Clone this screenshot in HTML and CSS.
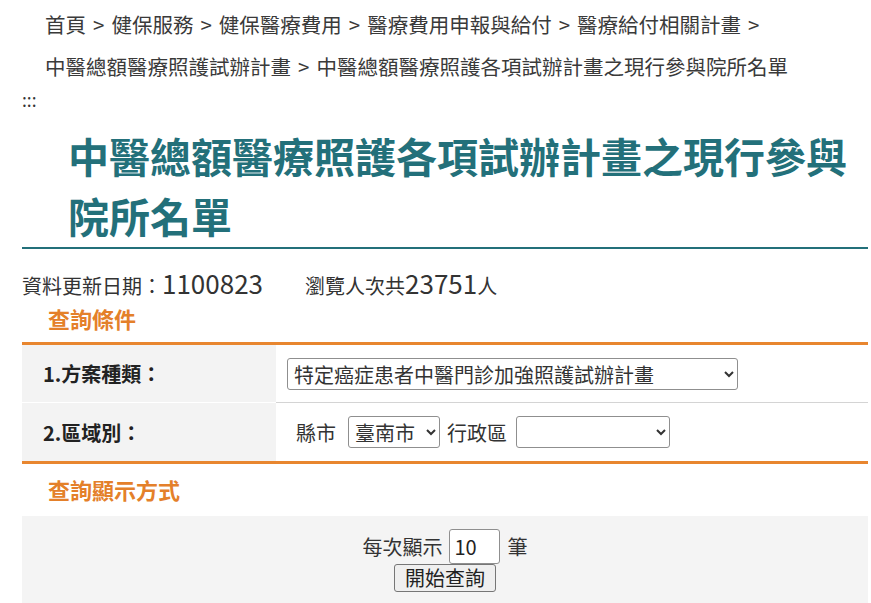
FILE: index.html
```html
<!DOCTYPE html>
<html lang="zh-Hant">
<head>
<meta charset="utf-8">
<title>中醫總額醫療照護各項試辦計畫之現行參與院所名單</title>
<link rel="stylesheet" href="styles.css">
</head>
<body>
<div class="page">
  <ul class="crumbs">
    <li>首頁<span class="sep">&gt;</span></li>
    <li>健保服務<span class="sep">&gt;</span></li>
    <li>健保醫療費用<span class="sep">&gt;</span></li>
    <li>醫療費用申報與給付<span class="sep">&gt;</span></li>
    <li>醫療給付相關計畫<span class="sep">&gt;</span></li>
    <li>中醫總額醫療照護試辦計畫<span class="sep">&gt;</span></li>
    <li>中醫總額醫療照護各項試辦計畫之現行參與院所名單</li>
  </ul>
  <div class="accesskey">:::</div>
  <h1 class="title">中醫總額醫療照護各項試辦計畫之現行參與院所名單</h1>
  <p class="info">資料更新日期：<span class="num">1100823</span><span class="views">瀏覽人次共<span class="num">23751</span>人</span></p>
  <h2 class="section">查詢條件</h2>
  <div class="form">
    <div class="label first">1.方案種類：</div>
    <div class="value first">
      <select class="sel-plan">
        <option>特定癌症患者中醫門診加強照護試辦計畫</option>
      </select>
    </div>
    <div class="label">2.區域別：</div>
    <div class="value">
      <span class="county">縣市</span>
      <select class="sel-city"><option>臺南市</option></select>
      <span class="district">行政區</span>
      <select class="sel-dist"><option></option></select>
    </div>
  </div>
  <h2 class="section second">查詢顯示方式</h2>
  <div class="display">
    <div class="per-page">每次顯示<input class="count" type="text" value="10">筆</div>
    <button class="submit" type="button">開始查詢</button>
  </div>
</div>
</body>
</html>
```
FILE: styles.css
```css
html, body {
  margin: 0;
  padding: 0;
  background: #ffffff;
}
body {
  font-family: "Noto Sans CJK TC", "Noto Sans", sans-serif;
  color: #333333;
}
.page {
  padding: 3px 3px 0 22px;
}
.crumbs {
  list-style: none;
  margin: 0;
  padding: 0 0 0 23px;
  display: flex;
  flex-wrap: wrap;
  font-size: 20.5px;
  line-height: 42px;
  color: #3a3a3a;
}
.crumbs li {
  white-space: nowrap;
}
.crumbs .sep {
  margin: 0 7px;
}
.accesskey {
  font-family: "Noto Sans", sans-serif;
  font-size: 18px;
  line-height: 26px;
  color: #333;
}
.title {
  margin: 12px 0 0 0;
  padding: 0 0 2px 46px;
  font-size: 41px;
  line-height: 60px;
  font-weight: bold;
  color: #23707a;
  border-bottom: 2px solid #23707a;
}
.info {
  margin: 19px 0 0 0;
  font-size: 20px;
  line-height: 30px;
  color: #333;
}
.info .num {
  font-size: 26px;
}
.info .views {
  margin-left: 42px;
}
.section {
  margin: 2px 0 0 0;
  padding-left: 26px;
  font-size: 22px;
  line-height: 30px;
  font-weight: bold;
  color: #e4802a;
}
.section.second {
  margin-top: 10px;
}
.form {
  margin-top: 9px;
  display: grid;
  grid-template-columns: 254px 1fr;
  border-top: 3px solid #e8862f;
  border-bottom: 3px solid #e8862f;
}
.label {
  background: #f3f3f3;
  display: flex;
  align-items: center;
  padding-left: 21px;
  font-size: 20px;
  font-weight: bold;
  color: #222;
  height: 58px;
}
.label.first {
  height: 57px;
  border-bottom: 1px solid #ffffff;
}
.value {
  display: flex;
  align-items: center;
  padding-left: 11px;
  height: 58px;
  font-size: 20px;
  color: #333;
}
.value.first {
  height: 57px;
  border-bottom: 1px solid #d4d4d4;
}
select {
  font-family: "Noto Sans CJK TC", "Noto Sans", sans-serif;
  font-size: 20px;
  color: #333;
  background: #ffffff;
  border: 1px solid #8f8f8f;
  border-radius: 3px;
  height: 32px;
  padding: 0 2px;
}
.sel-plan {
  width: 451px;
}
.county {
  margin-left: 9px;
  margin-right: 12px;
}
.sel-city {
  width: 92px;
}
.district {
  margin: 0 9px 0 7px;
}
.sel-dist {
  width: 154px;
}
.display {
  margin-top: 12px;
  background: #f4f4f4;
  padding: 13px 0 30px 0;
  display: flex;
  flex-direction: column;
  align-items: center;
  font-size: 20px;
  color: #333;
}
.per-page {
  display: flex;
  align-items: center;
  gap: 6px;
  height: 35px;
}
.count {
  width: 51px;
  height: 35px;
  box-sizing: border-box;
  margin-right: 2px;
  padding: 0 5px;
  border: 1px solid #8f8f8f;
  border-radius: 3px;
  font-family: "Noto Sans CJK TC", "Noto Sans", sans-serif;
  font-size: 20px;
  color: #222;
  background: #fff;
}
.submit {
  height: 28px;
  padding: 0 10px;
  border: 1px solid #767676;
  border-radius: 3px;
  background: #efefef;
  font-family: "Noto Sans CJK TC", "Noto Sans", sans-serif;
  font-size: 20px;
  line-height: 26px;
  color: #222;
}
```
